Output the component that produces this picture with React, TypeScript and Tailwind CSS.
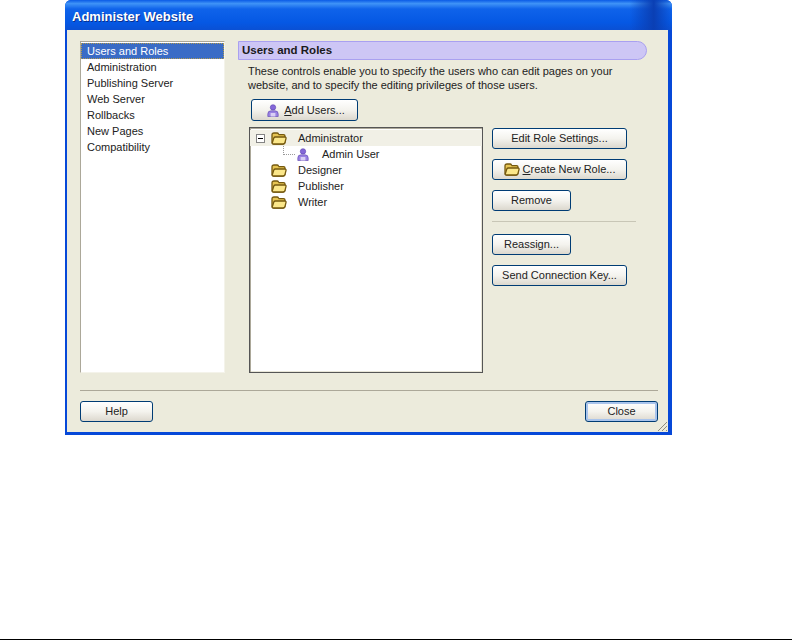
import type { ReactNode } from "react";

const NAV_ITEMS = [
  "Users and Roles",
  "Administration",
  "Publishing Server",
  "Web Server",
  "Rollbacks",
  "New Pages",
  "Compatibility",
];

function FolderIcon() {
  return (
    <svg width="16" height="13" viewBox="0 0 16 13" className="shrink-0">
      <path d="M1 3 Q1 1 3 1 H6 Q7 1 7.6 2 L8 2.6 H12.5 Q14 2.6 14 4 V10 Q14 12 12 12 H3 Q1 12 1 10 Z" fill="#e6c452" stroke="#75590f" strokeWidth="1.3" />
      <path d="M1.2 11 L2.8 6 Q3.2 5 4.4 5 H13.6 Q15.4 5 15 6.6 L14 10.4 Q13.6 12 12 12 H2.6 Q1 12 1.2 11 Z" fill="#fbe78a" stroke="#75590f" strokeWidth="1.3" />
    </svg>
  );
}

function UserIcon() {
  return (
    <svg width="12" height="13" viewBox="0 0 12 13" className="shrink-0">
      <circle cx="6" cy="3.4" r="2.7" fill="#8468d8" stroke="#5a3fb0" strokeWidth="0.6" />
      <path d="M0.8 12.5 V10 Q0.8 6.8 4 6.8 H8 Q11.2 6.8 11.2 10 V12.5 Z" fill="#9a82e2" stroke="#5a3fb0" strokeWidth="0.6" />
      <rect x="3.6" y="9" width="4.8" height="3.5" fill="#d9cff5" />
    </svg>
  );
}

function Btn({
  className,
  isDefault,
  children,
}: {
  className: string;
  isDefault?: boolean;
  children: ReactNode;
}) {
  return (
    <div
      className={`${className} shrink-0 rounded-[3px] border border-[#003c74] bg-gradient-to-b from-white via-[#f4f3ee] to-[#dcd8ce] flex items-center justify-center gap-[3px] text-[11px] text-[#222] ${isDefault ? "shadow-[inset_0_0_0_2px_#a9c4ec]" : ""}`}
    >
      {children}
    </div>
  );
}

function TreeRow({
  label,
  active,
  expander,
}: {
  label: string;
  active?: boolean;
  expander?: boolean;
}) {
  return (
    <div className={`h-4 flex items-center ${active ? "bg-[#f1f0e6]" : ""}`}>
      <div className="w-[21px] pl-[6px] shrink-0">
        {expander && (
          <div className="w-[9px] h-[9px] border border-[#848484] bg-white flex items-center justify-center">
            <div className="w-[5px] h-px bg-black" />
          </div>
        )}
      </div>
      <FolderIcon />
      <span className="ml-[11px] text-[11px] text-[#222]">{label}</span>
    </div>
  );
}

export default function App() {
  return (
    <div className="h-[640px] bg-white border-b border-black [font-family:'Liberation_Sans',Arial,sans-serif]">
      <div className="relative ml-[65px] w-[607px] h-[435px] flex flex-col rounded-t-[6px] bg-[#0648d8] pl-[2px] pr-[4px] pb-[3px]">
        <div className="-ml-[2px] -mr-[4px] h-[30px] shrink-0 rounded-t-[6px] bg-[linear-gradient(90deg,transparent_93%,#0a3fb4_97%,transparent_100%),linear-gradient(180deg,#0a5be6_0%,#3f93f7_12%,#0f63ea_30%,#0558e4_75%,#0a50d4_100%)] pl-[7px] pt-[3px] flex items-center">
          <span className="text-[13px] font-bold text-white [text-shadow:1px_1px_0_#0a2f8c]">
            Administer Website
          </span>
        </div>

        <div className="flex-1 bg-[#ecebdc] pl-[13px] pr-[10px] pt-[11px] flex flex-col text-[#222]">
          <div className="flex gap-[13px]">
            <div className="w-[145px] h-[332px] shrink-0 bg-white border border-[#aca899] border-b-[#f4f3ea] border-r-[#f4f3ea] py-px">
              {NAV_ITEMS.map((item, i) => (
                <div
                  key={item}
                  className={`h-4 flex items-center text-[11px] ${i === 0 ? "bg-[#3a6cc6] text-white border border-dotted border-[#b09a50] pl-[5px]" : "text-[#222] pl-[6px]"}`}
                >
                  {item}
                </div>
              ))}
            </div>

            <div className="flex-1 min-w-0">
              <div className="w-[409px] h-[19px] rounded-r-[10px] bg-[#cdc6f5] border border-[#a9a0f0] flex items-center pl-[3px] text-[11.5px] font-bold text-[#1a1a1a]">
                Users and Roles
              </div>
              <p className="mt-1 ml-[10px] w-[390px] text-[11px] leading-[14px] text-[#222]">
                These controls enable you to specify the users who can edit pages on your website, and to specify the editing privileges of those users.
              </p>
              <div className="mt-[7px] ml-[13px]">
                <Btn className="w-[107px] h-[22px] pl-[3px]">
                  <UserIcon />
                  <span className="ml-[2px]">
                    <span className="underline">A</span>dd Users...
                  </span>
                </Btn>
              </div>

              <div className="mt-[6px] ml-[11px] flex gap-[9px]">
                <div className="w-[234px] h-[246px] shrink-0 bg-white border border-[#555] shadow-[inset_1px_1px_0_#aca899,inset_-1px_-1px_0_#e8e6d8] pt-[2px]">
                  <TreeRow label="Administrator" active expander />
                  <div className="relative h-4 flex items-center pl-[47px]">
                    <div className="absolute left-[33px] top-0 h-[9px] w-[12px] border-l border-b border-dotted border-[#999]" />
                    <UserIcon />
                    <span className="ml-[13px] text-[11px] text-[#222]">Admin User</span>
                  </div>
                  <TreeRow label="Designer" />
                  <TreeRow label="Publisher" />
                  <TreeRow label="Writer" />
                </div>

                <div className="w-[144px] pt-px flex flex-col">
                  <Btn className="w-[135px] h-[21px]">Edit Role Settings...</Btn>
                  <div className="mt-[10px]">
                    <Btn className="w-[135px] h-[21px]">
                      <FolderIcon />
                      <span>
                        <span className="underline">C</span>reate New Role...
                      </span>
                    </Btn>
                  </div>
                  <div className="mt-[10px]">
                    <Btn className="w-[79px] h-[21px]">Remove</Btn>
                  </div>
                  <div className="mt-[10px] h-px bg-[#c8c6b6]" />
                  <div className="mt-3">
                    <Btn className="w-[79px] h-[21px]">Reassign...</Btn>
                  </div>
                  <div className="mt-[10px]">
                    <Btn className="w-[135px] h-[21px]">Send Connection Key...</Btn>
                  </div>
                </div>
              </div>
            </div>
          </div>

          <div className="mt-[17px] h-px bg-[#aca899]" />
          <div className="mt-[10px] flex justify-between">
            <Btn className="w-[73px] h-[21px]">Help</Btn>
            <Btn className="w-[73px] h-[21px]" isDefault>
              Close
            </Btn>
          </div>
        </div>

        <svg width="12" height="12" viewBox="0 0 12 12" className="absolute right-[4px] bottom-[3px]">
          <path d="M11 2 L2 11 M11 6 L6 11 M11 10 L10 11" stroke="#8f8d7e" strokeWidth="1" />
        </svg>
      </div>
    </div>
  );
}
